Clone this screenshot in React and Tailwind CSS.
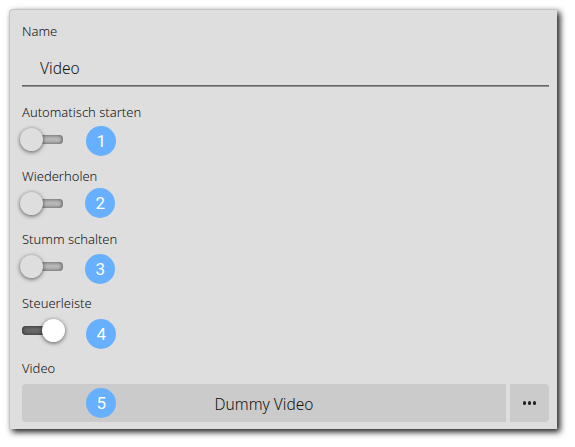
import { useState } from 'react';
import clsx from 'clsx';

const OPTIONS = [
  { id: 'autoplay', label: 'Automatisch starten', on: false, marker: 1, row: 'h-16', pos: 'left-[64.4px] top-[23.4px]' },
  { id: 'loop', label: 'Wiederholen', on: false, marker: 2, row: 'h-[63px]', pos: 'left-[63.4px] top-[21.4px]' },
  { id: 'muted', label: 'Stumm schalten', on: false, marker: 3, row: 'h-16', pos: 'left-[63.4px] top-[24.4px]' },
  { id: 'controls', label: 'Steuerleiste', on: true, marker: 4, row: 'h-[65px]', pos: 'left-[64.4px] top-[25.4px]' },
];

const Marker = ({ value, className }) => (
  <span
    className={clsx(
      'absolute w-[30px] h-[30px] rounded-full bg-[#66b0ff] text-white flex items-center justify-center font-[Roboto,sans-serif] text-[17px] leading-none',
      className
    )}
  >
    {value}
  </span>
);

const Toggle = ({ on, onClick, label }) => (
  <button role="switch" aria-checked={on} aria-label={label} onClick={onClick} className="relative block w-[41px] h-[9px]">
    <span
      className={clsx(
        'block w-full h-full rounded-[4px]',
        on
          ? 'bg-[#6c6c6c] shadow-[inset_0_0_4px_#222]'
          : 'bg-[#bcbcbc] shadow-[inset_0_0_4px_#444]'
      )}
    />
    <span
      className={clsx(
        'absolute w-[23px] h-[23px] -top-[7px] rounded-full shadow-[0_1px_4px_rgba(0,0,0,0.6)]',
        on ? 'left-[20px] bg-white' : '-left-[2px] bg-[#dedede]'
      )}
    />
  </button>
);

const App = () => {
  const [values, setValues] = useState(() => Object.fromEntries(OPTIONS.map(o => [o.id, o.on])));
  const [name, setName] = useState('Video');

  const toggle = (id) => setValues(prev => ({ ...prev, [id]: !prev[id] }));

  return (
    <div className="w-[575px] h-[447px] bg-white pl-[9px] pt-[9px] font-['Noto_Sans',sans-serif] text-[#111]">
      <div className="w-[548px] h-[420px] bg-[#dedede] border-t border-l border-[#c4c4c4] rounded-tl-[4px] pl-3 pr-2 pt-3 shadow-[3px_3px_6px_rgba(0,0,0,0.9)]">
        {/* Name */}
        <div className="h-[81px]">
          <label htmlFor="name" className="block text-[13px] leading-[18px] font-light">Name</label>
          <input
            id="name"
            value={name}
            onChange={e => setName(e.target.value)}
            className="block w-full h-[34px] mt-[12px] pl-[18px] pb-[2px] border-b border-[#666] shadow-[0_1px_0_#929292] text-[15.5px] font-light outline-none"
          />
        </div>

        {/* Options */}
        {OPTIONS.map(o => (
          <div key={o.id} className={clsx('relative', o.row)}>
            <div className="text-[13px] leading-[18px] font-light mb-[14px]">{o.label}</div>
            <Toggle on={values[o.id]} onClick={() => toggle(o.id)} label={o.label} />
            <Marker value={o.marker} className={o.pos} />
          </div>
        ))}

        {/* Video picker */}
        <div className="text-[13px] leading-[18px] font-light">Video</div>
        <div className="relative mt-[7px] flex gap-1 h-[38px]">
          <button className="flex-1 bg-[#cbcbcb] rounded-l-[4px] text-[15.5px] font-light pt-[3px]">Dummy Video</button>
          <button aria-label="Auswählen" className="w-[39px] bg-[#cbcbcb] rounded-r-[4px] flex items-center justify-center gap-[1.5px]">
            <span className="w-[3.5px] h-[3.5px] rounded-full bg-[#222]" />
            <span className="w-[3.5px] h-[3.5px] rounded-full bg-[#222]" />
            <span className="w-[3.5px] h-[3.5px] rounded-full bg-[#222]" />
          </button>
          <Marker value={5} className="left-[64.4px] top-[4.4px]" />
        </div>
      </div>
    </div>
  );
};

export default App;
